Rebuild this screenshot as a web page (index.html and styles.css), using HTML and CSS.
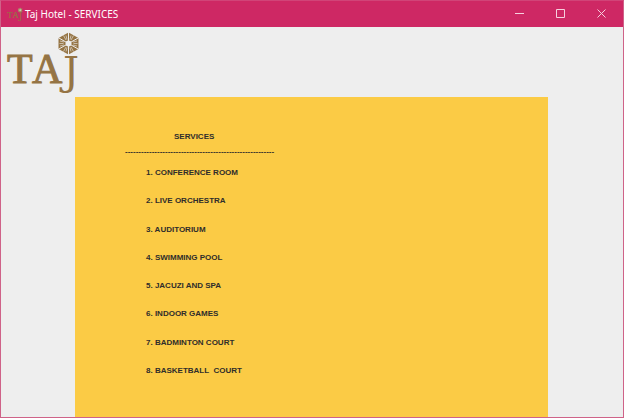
FILE: index.html
```html
<!DOCTYPE html>
<html lang="en">
<head>
<meta charset="utf-8">
<title>Taj Hotel - SERVICES</title>
<link rel="stylesheet" href="styles.css">
</head>
<body>
<div class="window">
  <header class="titlebar">
    <svg class="app-icon" viewBox="0 0 76 66" aria-hidden="true"><use href="#taj-logo"/></svg>
    <h1 class="title">Taj Hotel - SERVICES</h1>
    <div class="controls">
      <button class="control" type="button" aria-label="Minimize"><svg viewBox="0 0 10 10"><path d="M0 4.500h9"/></svg></button>
      <button class="control" type="button" aria-label="Maximize"><svg viewBox="0 0 10 10"><path d="M.5 .5h8v8h-8z"/></svg></button>
      <button class="control" type="button" aria-label="Close"><svg viewBox="0 0 10 10"><path d="M.5 .5l8 8M8.500 .5l-8 8"/></svg></button>
    </div>
  </header>
  <main class="content">
    <svg class="logo" viewBox="0 0 76 66" role="img" aria-label="Taj">
      <g id="taj-logo">
        <path class="emblem" d="M62.500 3.500l10 5.500v11l-10 5.500-10-5.500V9z"/>
        <path class="gap" d="M62.500 3v23M52 8.500l21 12M73 8.500l-21 12"/>
        <path class="cut" d="M57.500 6.500l2.500 4.500M67.500 6.500L65 11M57.500 22.500l2.500-4.500M67.500 22.500L65 18M53.500 14.500h4M67.500 14.500h4M60 6.500l1 4M65 6.500l-1 4M60 22.500l1-4M65 22.500l-1-4M54 12l4 1M54 17l4-1M71 12l-4 1M71 17l-4-1"/>
        <circle class="hub" cx="62.500" cy="14.500" r="3"/>
        <text class="serif" x="1" y="54">T</text>
        <text class="serif" x="26" y="54">A</text>
        <text class="tail" x="57" y="56">J</text>
      </g>
    </svg>
    <section class="panel">
      <h2 class="heading">SERVICES</h2>
      <p class="rule">--------------------------------------------------------</p>
      <ul class="services">
        <li>1. CONFERENCE ROOM</li>
        <li>2. LIVE ORCHESTRA</li>
        <li>3. AUDITORIUM</li>
        <li>4. SWIMMING POOL</li>
        <li>5. JACUZI AND SPA</li>
        <li>6. INDOOR GAMES</li>
        <li>7. BADMINTON COURT</li>
        <li>8. BASKETBALL&nbsp; COURT</li>
      </ul>
    </section>
  </main>
</div>
</body>
</html>
```
FILE: styles.css
```css
* { box-sizing: border-box; }
body { margin: 0; background: #eeeeee; }
.window {
  display: flex;
  flex-direction: column;
  min-height: 100vh;
  border: 1px solid #cf6288;
  border-top-color: #d14478;
}
.titlebar {
  display: flex;
  align-items: center;
  height: 26px;
  padding-left: 6px;
  background: #ce2864;
  color: #ffffff;
}
.app-icon { width: 16px; height: 14px; margin-right: 2px; }
.title {
  margin: 0;
  font: 400 10px/16px "Noto Sans", "Open Sans", sans-serif;
}
.controls { display: flex; margin-left: auto; padding-right: 1px; }
.control {
  display: grid;
  place-items: center;
  width: 41px;
  height: 26px;
  padding: 0;
  border: 0;
  background: none;
}
.control svg {
  width: 10px;
  height: 10px;
  fill: none;
  stroke: #f6d0de;
  stroke-width: 1;
}
.content {
  display: flex;
  flex: 1;
  flex-direction: column;
}
.logo { width: 76px; height: 66px; margin: 2px 0 2px 5px; }
.emblem { fill: #957444; }
.gap, .cut { fill: none; stroke: #eeeeee; stroke-width: 1; }
.cut { opacity: .6; }
.hub { fill: #eeeeee; }
.serif, .tail { fill: #957444; }
.serif { font: 42px "Liberation Serif", serif; stroke: #957444; stroke-width: 1; }
.tail { font: 40px "DejaVu Serif", serif; }
.panel {
  flex: 1;
  margin: 0 75px 0 74px;
  padding: 33px 50px 0;
  background: #fbcb45;
  color: #2f2d2b;
  font: 700 8px/14px "Liberation Sans", Arial, sans-serif;
}
.heading { margin: 0 0 0 49px; font-size: 8px; }
.rule { margin: 1px 0 0; white-space: nowrap; }
.services {
  display: grid;
  grid-auto-rows: 1fr;
  align-items: center;
  min-height: 226px;
  margin: 0;
  padding: 0 0 0 21px;
  list-style: none;
}
```
